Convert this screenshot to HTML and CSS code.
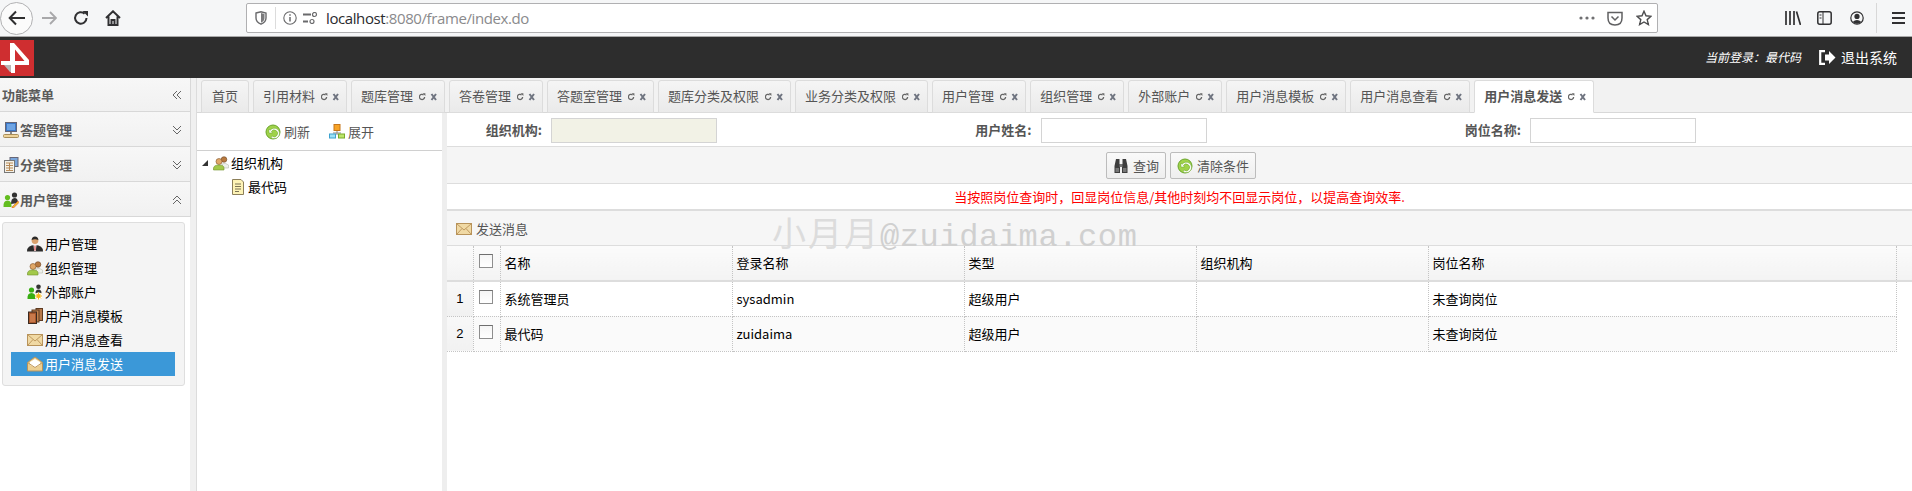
FILE: index.html
```html
<!DOCTYPE html>
<html lang="zh">
<head>
<meta charset="utf-8">
<title>用户消息发送</title>
<link rel="stylesheet" href="styles.css">
</head>
<body>
<svg class="defs" width="0" height="0">
  <defs>
    <symbol id="i-ops" viewBox="0 0 18 8"><path d="M5.6 4 A2.6 2.6 0 1 1 4.6 1.9" fill="none" stroke="#666" stroke-width="1.3"/><path d="M3.6 .2 H6.4 V3 Z" fill="#666"/><path d="M12.5 1 L17 7 M17 1 L12.5 7" fill="none" stroke="#6f7480" stroke-width="2"/></symbol>
    <symbol id="i-refresh" viewBox="0 0 16 16"><circle cx="8" cy="8" r="7" fill="#9fd24a" stroke="#6aa52a"/><path d="M4 5 L4 9 L7.5 9 L6.3 7.6 A3.4 3.4 0 1 1 7 12 L6 13.4 A5.2 5.2 0 1 0 5.2 6.2 Z" fill="#fff" stroke="#6aa52a" stroke-width=".5"/></symbol>
    <symbol id="i-mail" viewBox="0 0 16 16"><rect x=".5" y="2.5" width="15" height="11" fill="#f0d9a4" stroke="#b8935a"/><path d="M1 3 L8 9 L15 3 M1 13 L6 7.5 M15 13 L10 7.5" fill="none" stroke="#c09a60"/></symbol>
    <symbol id="i-mailopen" viewBox="0 0 16 16"><path d="M.5 6.5 L8 1 L15.5 6.5 V15 H.5 Z" fill="#eccf92" stroke="#b8935a"/><path d="M3 6 L8 3 L13 6 V9 L8 11.5 L3 9 Z" fill="#fff"/><path d="M1 6.8 L8 11.5 L15 6.8" fill="none" stroke="#c09a60"/></symbol>
    <symbol id="i-group" viewBox="0 0 16 16"><circle cx="11" cy="4.5" r="2.8" fill="#b8793f" stroke="#6d4523" stroke-width=".6"/><path d="M9 9 Q12 7 15.5 10 V13 H9 Z" fill="#eef0ea" stroke="#b9bdb0" stroke-width=".6"/><circle cx="6" cy="6.5" r="3" fill="#e0a868" stroke="#7d5028" stroke-width=".6"/><path d="M.5 15 V13 Q1 10 6 10 Q11 10 11 13 V15 Z" fill="#a3c94a" stroke="#6f9128" stroke-width=".6"/></symbol>
    <symbol id="i-file" viewBox="0 0 16 16"><path d="M2.5 .5 H11 L13.5 3 V15.5 H2.5 Z" fill="#fdf3b6" stroke="#8c7f5a"/><path d="M5 5 H11 M5 7.5 H11 M5 10 H11 M5 12.5 H9" stroke="#7b7355" fill="none"/></symbol>
    <symbol id="i-tree" viewBox="0 0 16 16"><rect x="5" y=".5" width="6" height="6" fill="#f7a326" stroke="#c5761b"/><path d="M8 7 V11 M4 9 H12" stroke="#888" fill="none"/><rect x=".5" y="10" width="6" height="4" fill="#9fe1f5" stroke="#3ca2cf"/><rect x="9.5" y="10" width="6" height="4" fill="#bde56a" stroke="#79ab2a"/></symbol>
    <symbol id="i-pc" viewBox="0 0 16 16"><rect x="2.5" y=".5" width="11" height="9" fill="#3a78c8" stroke="#667"/><rect x="4" y="2" width="8" height="6" fill="#6ea4e4"/><rect x="7" y="10" width="2" height="2" fill="#888"/><rect x=".5" y="12.5" width="15" height="3" rx="1" fill="#eed39a" stroke="#a88c58"/></symbol>
    <symbol id="i-calc" viewBox="0 0 16 16"><rect x="7" y=".5" width="8" height="9" fill="#7aa6dc" stroke="#667"/><rect x="1.5" y="3.5" width="10" height="12" fill="#f4f1e8" stroke="#777"/><path d="M3 6 H10 M3 8.5 H10 M3 11 H10 M3 13.5 H10 M6.5 6 V14" stroke="#b78a58" fill="none"/></symbol>
    <symbol id="i-users" viewBox="0 0 16 16"><circle cx="11.5" cy="3" r="2.6" fill="#333"/><path d="M8 12 Q8 6 11.5 6 Q15 6 15 11 Z" fill="#333"/><circle cx="4.5" cy="5.5" r="2.6" fill="#63bd1f"/><path d="M.5 15 Q0 8.5 4.5 8.5 Q9 8.5 8.5 15 Z" fill="#63bd1f"/><path d="M9 15 L15 9 L16 10.5 L10.5 16 H9 Z" fill="#f2bb28" stroke="#c43" stroke-width=".5"/></symbol>
    <symbol id="i-boss" viewBox="0 0 16 16"><circle cx="8" cy="4.5" r="3.4" fill="#d9a06d"/><path d="M4.6 4 Q5 .5 8 .5 Q11 .5 11.4 4 Q8 2.5 4.6 4 Z" fill="#2a2a2a"/><path d="M0 15.5 Q0 9 8 9 Q16 9 16 15.5 Z" fill="#2b2b2b"/><path d="M6.5 9 H9.5 L8.8 15 H7.2 Z" fill="#fff"/><path d="M7.5 9.5 H8.5 L8.6 14.5 H7.4 Z" fill="#c33"/></symbol>
    <symbol id="i-ext" viewBox="0 0 16 16"><circle cx="11.5" cy="2.8" r="2.3" fill="#333"/><path d="M8.5 9 Q8.5 5.5 11.5 5.5 Q14.5 5.5 14.5 9 Z" fill="#333"/><circle cx="4.5" cy="6" r="2.6" fill="#39ae12"/><path d="M.5 15 Q0 9 4.5 9 Q9 9 8.5 15 Z" fill="#39ae12"/><circle cx="11.5" cy="12" r="3.6" fill="#fff"/><circle cx="11.5" cy="12" r="2" fill="#f6b81c"/><path d="M11.5 8.5 V15.5 M8 12 H15 M9 9.5 L14 14.5 M14 9.5 L9 14.5" stroke="#f6b81c" fill="none"/></symbol>
    <symbol id="i-book" viewBox="0 0 16 16"><rect x="9" y=".5" width="6.5" height="12" fill="#b6784a" stroke="#5d3a20"/><rect x="5" y="2" width="7" height="12" fill="#c4834f" stroke="#5d3a20"/><rect x="1.5" y="4" width="8" height="11.5" fill="#a9582c" stroke="#3b2a20"/><rect x="3" y="6" width="5" height="8" fill="#c9794a"/></symbol>
    <symbol id="i-bino" viewBox="0 0 16 16"><path d="M3 1 H6.5 V6 H7 V15 H1.5 V8 Z M9.5 1 H13 L14.5 8 V15 H9 V6 H9.5 Z" fill="#3d3d3d"/><rect x="6.5" y="6" width="3" height="3" fill="#777"/><rect x="2.5" y="10" width="3.5" height="4" fill="#777"/><rect x="10" y="10" width="3.5" height="4" fill="#777"/></symbol>
  </defs>
</svg>

<nav class="browser">
  <span class="back"><svg width="18" height="16" viewBox="0 0 18 16"><path d="M8 1.5 L1.7 8 L8 14.5 M2 8 H17" fill="none" stroke="#2f2f30" stroke-width="2"/></svg></span>
  <svg class="forward" width="16" height="14" viewBox="0 0 16 14"><path d="M9 1 L15 7 L9 13 M15 7 H1" fill="none" stroke="#a8a8aa" stroke-width="1.8"/></svg>
  <svg class="reload" width="16" height="16" viewBox="0 0 16 16"><path d="M13.5 8 A5.7 5.7 0 1 1 11.6 3.7" fill="none" stroke="#303032" stroke-width="2"/><path d="M9.5 1 H15 V6.5 Z" fill="#303032"/></svg>
  <svg class="home" width="16" height="16" viewBox="0 0 16 16"><path d="M1 8 L8 1.3 L15 8 M3.5 6.5 V15 H12.5 V6.5 M6.5 15 V10 H9.5 V15" fill="none" stroke="#303032" stroke-width="2"/></svg>
  <div class="address">
    <svg class="shield" width="12" height="14" viewBox="0 0 12 14"><path d="M1 2 L6 .8 L11 2 V7 Q11 11 6 13.2 Q1 11 1 7 Z" fill="none" stroke="#6a6a6c" stroke-width="1.4"/><path d="M6 2 L9.5 3 V7 Q9.5 10 6 11.8 Z" fill="#7a7a7c"/></svg>
    <span class="addr-sep"></span>
    <svg class="info" width="14" height="14" viewBox="0 0 14 14"><circle cx="7" cy="7" r="6.2" fill="none" stroke="#6a6a6c" stroke-width="1.1"/><path d="M7 6 V10.5 M7 3.2 V4.8" stroke="#6a6a6c" stroke-width="1.5"/></svg>
    <svg class="perm" width="15" height="12" viewBox="0 0 15 12"><path d="M0 2.5 H8 M0 9.5 H5" stroke="#6a6a6c" stroke-width="2"/><circle cx="11.5" cy="2.5" r="2" fill="none" stroke="#6a6a6c" stroke-width="1.2"/><circle cx="9" cy="9.5" r="2" fill="none" stroke="#6a6a6c" stroke-width="1.2"/></svg>
    <span class="url"><b>localhost</b>:8080/frame/index.do</span>
    <svg class="dots" width="16" height="4" viewBox="0 0 16 4"><circle cx="2" cy="2" r="1.6"/><circle cx="8" cy="2" r="1.6"/><circle cx="14" cy="2" r="1.6"/></svg>
    <svg class="pocket" width="16" height="15" viewBox="0 0 16 15"><path d="M1 1.5 H15 V7 Q15 14 8 14 Q1 14 1 7 Z M4.5 5.5 L8 9 L11.5 5.5" fill="none" stroke="#606062" stroke-width="1.5"/></svg>
    <svg class="star" width="16" height="16" viewBox="0 0 16 16"><path d="M8 1.2 L10 5.8 L15 6.3 L11.2 9.6 L12.4 14.6 L8 12 L3.6 14.6 L4.8 9.6 L1 6.3 L6 5.8 Z" fill="none" stroke="#4c4c4e" stroke-width="1.4"/></svg>
  </div>
  <svg class="library" width="16" height="14" viewBox="0 0 16 14"><path d="M1 0 V14 M5 0 V14 M9 0 V14 M11.5 .5 L15.5 14" fill="none" stroke="#303032" stroke-width="1.7"/></svg>
  <svg class="sidebar" width="15" height="14" viewBox="0 0 15 14"><rect x=".8" y=".8" width="13.4" height="12.4" rx="2" fill="none" stroke="#303032" stroke-width="1.5"/><path d="M6 1 V13 M2.5 4 H4.5 M2.5 7 H4.5" stroke="#303032" fill="none"/></svg>
  <svg class="account" width="14" height="14" viewBox="0 0 14 14"><circle cx="7" cy="7" r="6.2" fill="none" stroke="#303032" stroke-width="1.2"/><circle cx="7" cy="5.4" r="2.6" fill="#303032"/><path d="M2.6 11 Q7 6.8 11.4 11 Q7 14.6 2.6 11 Z" fill="#303032"/></svg>
  <span class="bar-sep"></span>
  <svg class="menu" width="13" height="12" viewBox="0 0 13 12"><path d="M0 1 H13 M0 6 H13 M0 11 H13" stroke="#303032" stroke-width="2"/></svg>
</nav>

<header class="top">
  <svg class="logo" width="34" height="36" viewBox="0 0 34 36"><rect width="34" height="36" fill="#cf2e30"/><path d="M4 25 L10 32 H13 V25 Z" fill="#b9b4b4"/><path d="M10 3 H14 L29 20 V25 H15 V33 H11 V25 H1 V21 H10 Z M15 9.5 V21 H24.5 Z" fill="#fff"/></svg>
  <div class="top-right">
    <span class="login">当前登录：最代码</span>
    <svg class="logout" width="17" height="15" viewBox="0 0 17 15"><path d="M6 1.2 H1.2 V13.8 H6" fill="none" stroke="#fff" stroke-width="2.2"/><path d="M6 4.5 H10 V1 L16.5 7.5 L10 14 V10.5 H6 Z" fill="#fff"/></svg>
    <span class="exit">退出系统</span>
  </div>
</header>

<div class="app">
  <aside class="side">
    <div class="side-head"><span>功能菜单</span><svg class="chev" width="10" height="10" viewBox="0 0 10 10"><path d="M5 1 L1 5 L5 9 M9 1 L5 5 L9 9" fill="none" stroke="#666"/></svg></div>
    <div class="acc"><svg class="ico"><use href="#i-pc"/></svg><span>答题管理</span><svg class="chev" width="10" height="10" viewBox="0 0 10 10"><path d="M1 1 L5 5 L9 1 M1 5 L5 9 L9 5" fill="none" stroke="#666"/></svg></div>
    <div class="acc"><svg class="ico"><use href="#i-calc"/></svg><span>分类管理</span><svg class="chev" width="10" height="10" viewBox="0 0 10 10"><path d="M1 1 L5 5 L9 1 M1 5 L5 9 L9 5" fill="none" stroke="#666"/></svg></div>
    <div class="acc"><svg class="ico"><use href="#i-users"/></svg><span>用户管理</span><svg class="chev" width="10" height="10" viewBox="0 0 10 10"><path d="M1 5 L5 1 L9 5 M1 9 L5 5 L9 9" fill="none" stroke="#666"/></svg></div>
    <div class="menu-box">
      <div class="item"><svg class="ico"><use href="#i-boss"/></svg><span>用户管理</span></div>
      <div class="item"><svg class="ico"><use href="#i-group"/></svg><span>组织管理</span></div>
      <div class="item"><svg class="ico"><use href="#i-ext"/></svg><span>外部账户</span></div>
      <div class="item"><svg class="ico"><use href="#i-book"/></svg><span>用户消息模板</span></div>
      <div class="item"><svg class="ico"><use href="#i-mail"/></svg><span>用户消息查看</span></div>
      <div class="item active"><svg class="ico"><use href="#i-mailopen"/></svg><span>用户消息发送</span></div>
    </div>
  </aside>

  <div class="content">
    <div class="tabs">
      <div class="tab plain">首页</div>
      <div class="tab">引用材料<svg class="ops"><use href="#i-ops"/></svg></div>
      <div class="tab">题库管理<svg class="ops"><use href="#i-ops"/></svg></div>
      <div class="tab">答卷管理<svg class="ops"><use href="#i-ops"/></svg></div>
      <div class="tab">答题室管理<svg class="ops"><use href="#i-ops"/></svg></div>
      <div class="tab">题库分类及权限<svg class="ops"><use href="#i-ops"/></svg></div>
      <div class="tab">业务分类及权限<svg class="ops"><use href="#i-ops"/></svg></div>
      <div class="tab">用户管理<svg class="ops"><use href="#i-ops"/></svg></div>
      <div class="tab">组织管理<svg class="ops"><use href="#i-ops"/></svg></div>
      <div class="tab">外部账户<svg class="ops"><use href="#i-ops"/></svg></div>
      <div class="tab">用户消息模板<svg class="ops"><use href="#i-ops"/></svg></div>
      <div class="tab">用户消息查看<svg class="ops"><use href="#i-ops"/></svg></div>
      <div class="tab current">用户消息发送<svg class="ops"><use href="#i-ops"/></svg></div>
    </div>
    <div class="panes">
      <section class="tree">
        <div class="tree-bar">
          <span class="tool"><svg class="ico"><use href="#i-refresh"/></svg>刷新</span>
          <span class="tool"><svg class="ico"><use href="#i-tree"/></svg>展开</span>
        </div>
        <div class="node root"><i class="tri"></i><svg class="ico"><use href="#i-group"/></svg><span>组织机构</span></div>
        <div class="node leaf"><svg class="ico"><use href="#i-file"/></svg><span>最代码</span></div>
      </section>
      <main class="main">
        <form class="query">
          <label class="field"><span>组织机构:</span><input class="ipt ro" readonly></label>
          <label class="field"><span>用户姓名:</span><input class="ipt"></label>
          <label class="field"><span>岗位名称:</span><input class="ipt"></label>
        </form>
        <div class="actions">
          <button class="btn" type="button"><svg class="ico"><use href="#i-bino"/></svg>查询</button>
          <button class="btn" type="button"><svg class="ico"><use href="#i-refresh"/></svg>清除条件</button>
        </div>
        <p class="notice">当按照岗位查询时，回显岗位信息/其他时刻均不回显示岗位，以提高查询效率.</p>
        <div class="grid-bar"><svg class="ico"><use href="#i-mail"/></svg><span>发送消息</span></div>
        <table class="grid">
          <colgroup><col class="c-num"><col class="c-ck"><col class="c-n"><col class="c-n"><col class="c-n"><col class="c-n"><col class="c-last"><col></colgroup>
          <thead>
            <tr><th></th><th class="ck"><i class="box"></i></th><th>名称</th><th>登录名称</th><th>类型</th><th>组织机构</th><th>岗位名称</th><th class="fill"></th></tr>
          </thead>
          <tbody>
            <tr><td class="num">1</td><td class="ck"><i class="box"></i></td><td>系统管理员</td><td>sysadmin</td><td>超级用户</td><td></td><td>未查询岗位</td><td class="fill"></td></tr>
            <tr class="alt"><td class="num">2</td><td class="ck"><i class="box"></i></td><td>最代码</td><td>zuidaima</td><td>超级用户</td><td></td><td>未查询岗位</td><td class="fill"></td></tr>
          </tbody>
        </table>
      </main>
    </div>
  </div>
</div>
<div class="watermark"><span class="wm-cn">小月月</span>@zuidaima.com</div>
</body>
</html>
```
FILE: styles.css
```css
* { box-sizing: border-box; }
html, body { margin: 0; height: 100%; }
body {
  width: 1912px; height: 491px; overflow: hidden; position: relative;
  font: 13px/18px "Noto Sans CJK SC", "Liberation Sans", sans-serif;
  background: #fff; color: #000;
  display: flex; flex-direction: column;
}
.defs { position: absolute; }
.ico { width: 16px; height: 16px; flex: none; display: block; }

/* browser chrome */
.browser {
  height: 37px; flex: none; display: flex; align-items: center; position: relative;
  background: #f5f6f7; border-bottom: 1px solid #a9a9a9;
}
.back {
  width: 33px; height: 33px; border-radius: 50%; border: 1px solid #b1b1b3; background: #fbfbfb;
  display: flex; align-items: center; justify-content: center; margin-left: 0; flex: none;
}
.forward { margin-left: 8px; }
.reload { margin-left: 16px; }
.home { margin-left: 16px; }
.address {
  width: 1412px; height: 30px; margin-left: 125px; flex: none;
  background: #fff; border: 1px solid #b0b0b2; border-radius: 2px;
  display: flex; align-items: center;
}
.shield { margin-left: 8px; }
.addr-sep { width: 1px; height: 22px; background: #dcdcdc; margin-left: 8px; }
.info { margin-left: 7px; }
.perm { margin-left: 6px; }
.url { margin-left: 8px; font: 15px/20px "Open Sans", "Liberation Sans", sans-serif; color: #8a8a8c; letter-spacing: -.4px; }
.url b { font-weight: 400; color: #2a2a2e; }
.dots { margin-left: auto; fill: #707072; }
.pocket { margin-left: 12px; }
.star { margin-left: 13px; margin-right: 5px; }
.library { margin-left: 127px; }
.sidebar { margin-left: 16px; }
.account { margin-left: 18px; }
.bar-sep { width: 1px; height: 30px; background: #d8d8d8; margin-left: 12px; }
.menu { margin-left: 15px; }

/* dark header */
.top {
  height: 41px; flex: none; background: #2d2d2d; padding-top: 3px;
  display: flex; justify-content: space-between; align-items: flex-start;
}
.logo { display: block; }
.top-right { display: flex; align-items: center; color: #fff; height: 34px; padding-right: 15px; }
.login { font-size: 12px; font-style: italic; }
.logout { margin-left: 18px; }
.exit { font-size: 14px; margin-left: 5px; }

/* layout */
.app { flex: 1; display: flex; min-height: 0; }
.side { width: 197px; flex: none; border-right: 1px solid #dcdcdc; position: relative; background: linear-gradient(to right, #fff 190px, #f0f0f0 190px); }
.side-head, .acc {
  width: 191px; display: flex; align-items: center; color: #5a5a5a; font-weight: 700;
  background: linear-gradient(#f7f7f7, #f1f1f1); border-bottom: 1px solid #d8d8d8; border-right: 1px solid #d8d8d8;
}
.side-head { height: 34px; padding: 1px 0 0 2px; }
.acc { height: 35px; padding: 1px 0 0 3px; }
.acc span { margin-left: 1px; }
.chev { margin-left: auto; margin-right: 8px; flex: none; }
.menu-box {
  margin: 5px 0 0 2px; width: 183px; height: 164px; padding: 9px 9px 0 8px;
  background: #f4f4f4; border: 1px solid #dedede; border-radius: 3px;
}
.item { height: 24px; display: flex; align-items: center; padding-left: 16px; color: #000; }
.item span { margin-left: 2px; }
.item.active { background: #3b98d8; color: #fff; }

.content { flex: 1; min-width: 0; display: flex; flex-direction: column; }
.tabs {
  height: 35px; flex: none; display: flex; align-items: flex-end; gap: 4px; padding-left: 4px;
  background: #f2f2f2; border-bottom: 1px solid #d8d8d8;
}
.tab {
  height: 33px; padding: 0 7px 1px 9px; margin-bottom: -1px; display: flex; align-items: center; color: #555;
  background: linear-gradient(#f5f5f5, #eaeaea); border: 1px solid #dcdcdc; border-radius: 3px 3px 0 0; white-space: nowrap;
}
.tab.plain { padding: 0 10px 1px; }
.tab.current { background: #fff; border-bottom-color: #fff; font-weight: 700; }
.ops { width: 18px; height: 8px; margin: 2px 0 0 6px; flex: none; display: block; }

.panes { flex: 1; display: flex; min-height: 0; }
.tree { flex: none; border-right: 5px solid #eee; width: 250px; }
.tree-bar {
  height: 38px; display: flex; align-items: center; padding-left: 68px; gap: 19px; color: #555;
  border-bottom: 1px solid #d0d0d0;
}
.tool { display: flex; align-items: center; gap: 3px; }
.node { height: 24px; display: flex; align-items: center; }
.root { padding-left: 5px; }
.root span { margin-left: 2px; }
.leaf { padding-left: 33px; }
.leaf span { margin-left: 2px; }
.tri { width: 0; height: 0; border-style: solid; border-width: 0 0 6px 6px; border-color: transparent transparent #333 transparent; margin-right: 5px; }

.main { flex: 1; min-width: 0; }
.query { height: 34px; margin: 0; padding-top: 1px; display: grid; grid-template-columns: repeat(3, 489.5px); align-items: center; border-bottom: 1px solid #ddd; }
.field { display: flex; align-items: center; color: #555; font-weight: 700; }
.field span { width: 95px; text-align: right; margin-right: 9px; }
.ipt { width: 166px; height: 25px; border: 1px solid #d4d4d4; background: #fff; padding: 0; }
.ipt.ro { background: #f2f2e6; }
.actions { height: 37px; padding: 1px 0 0 3px; display: flex; justify-content: center; align-items: center; gap: 4px; background: #f5f5f5; border-bottom: 1px solid #ddd; }
.btn {
  height: 27px; padding: 0 6px; display: flex; align-items: center; gap: 4px; font: inherit; color: #555;
  background: linear-gradient(#fafafa, #eeeeee); border: 1px solid #bcbcbc; border-radius: 2px;
}
.notice { margin: 0; height: 27px; line-height: 26px; text-align: center; color: #f00; border-bottom: 2px solid #ddd; font-size: 13px; }
.grid-bar { height: 35px; padding: 1px 0 0 9px; display: flex; align-items: center; gap: 4px; color: #555; background: #f6f6f6; border-bottom: 1px solid #ddd; }

.grid { width: 100%; table-layout: fixed; border-collapse: collapse; }
.c-num { width: 26px; } .c-ck { width: 27px; } .c-n { width: 232px; } .c-last { width: 468px; }
.grid th, .grid td { padding: 0 4px; text-align: left; font-weight: 400; height: 35px; border-right: 1px dotted #c4c4c4; border-bottom: 1px dotted #c4c4c4; }
.grid th { background: linear-gradient(#fbfbfb, #f3f3f3); border-bottom: 2px solid #ddd; }
.grid th.fill { border-right: 0; }
.grid td.fill { border: 0; background: #fff; }
.grid td.num { background: linear-gradient(#f8f8f8, #f1f1f1); text-align: center; padding: 0; font-family: "Liberation Sans", sans-serif; font-size: 13px; }
.alt td { background: #fafafa; }
.grid .ck { padding: 0 0 0 5px; }
.box { display: block; width: 14px; height: 14px; border: 1px solid #8e8e8e; border-top-color: #6e6e6e; background: linear-gradient(#f5f5f5, #fff); margin-top: -4px; }

.watermark {
  position: absolute; left: 772px; top: 214px; color: #d0d0d0; white-space: nowrap;
  font: 32px/36px "Liberation Mono", monospace; letter-spacing: .6px; pointer-events: none;
}
.wm-cn { font: 34px/36px "Noto Sans CJK SC", sans-serif; letter-spacing: 2px; color: #dcdcdc; }
```
